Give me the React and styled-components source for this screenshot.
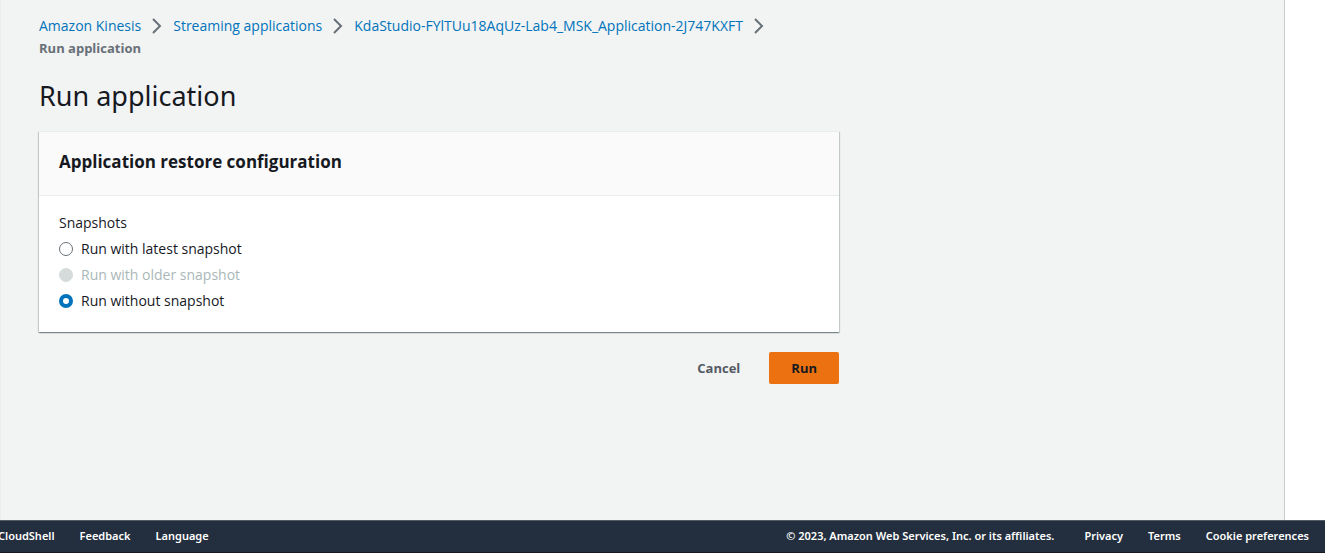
import React, { useState } from "react";
import styled, { createGlobalStyle } from "styled-components";

const GlobalStyle = createGlobalStyle`
  *, *::before, *::after { box-sizing: border-box; }
  body {
    margin: 0;
    background: #ffffff;
    color: #16191f;
    font-family: "Open Sans", "Noto Sans", sans-serif;
    font-size: 14px;
    line-height: 22px;
  }
`;

const Page = styled.div`
  display: flex;
  flex-direction: column;
  min-height: 100vh;
`;

const Workspace = styled.div`
  flex: 1;
  display: flex;
`;

const Main = styled.main`
  flex: 1;
  min-width: 0;
  padding: 15px 38px 40px;
  background: #f2f3f3;
  border-left: 1px solid #eaeded;
`;

const HelpRail = styled.aside`
  width: 41px;
  background: #ffffff;
  border-left: 1px solid #c6cccc;
`;

const Content = styled.div`
  max-width: 800px;
`;

const Crumbs = styled.ol`
  display: flex;
  flex-wrap: wrap;
  margin: 0;
  padding: 0;
  list-style: none;
`;

const Crumb = styled.li`
  display: flex;
  align-items: center;
  color: #687078;
  font-weight: ${(p) => (p.$current ? 700 : 400)};
  font-size: ${(p) => (p.$current ? 13 : 14)}px;
`;

const CrumbLink = styled.a`
  color: #0073bb;
  text-decoration: none;
  &:hover { text-decoration: underline; }
`;

const Chevron = styled.svg`
  width: 16px;
  height: 16px;
  margin: 0 8px;
  fill: none;
  stroke: #687078;
  stroke-width: 2;
`;

const Title = styled.h1`
  margin: 19px 0 17px;
  font-family: "Noto Sans", "Open Sans", sans-serif;
  font-size: 27px;
  line-height: 36px;
  font-weight: 400;
`;

const Card = styled.section`
  background: #ffffff;
  border-top: 1px solid #eaeded;
  box-shadow: 0 1px 1px 0 rgba(0, 28, 36, 0.3), 1px 1px 1px 0 rgba(0, 28, 36, 0.15),
    -1px 1px 1px 0 rgba(0, 28, 36, 0.15);
`;

const CardHeader = styled.header`
  padding: 19px 20px 22px;
  background: #fafafa;
  border-bottom: 1px solid #eaeded;
`;

const CardTitle = styled.h2`
  margin: 0;
  font-size: 17px;
  line-height: 22px;
  font-weight: 700;
`;

const Fieldset = styled.fieldset`
  display: flex;
  flex-direction: column;
  gap: 4px;
  margin: 0;
  padding: 16px 20px 20px;
  border: 0;
`;

const Legend = styled.legend`
  float: left;
  padding: 0;
  color: #16191f;
`;

const Option = styled.label`
  display: flex;
  align-items: center;
  gap: 8px;
  color: ${(p) => (p.$disabled ? "#aab7b8" : "#16191f")};
`;

const Radio = styled.input`
  appearance: none;
  width: 14px;
  height: 14px;
  margin: 0;
  border: 1px solid #687078;
  border-radius: 50%;
  background: #ffffff;
  &:checked { border: 4px solid #0073bb; }
  &:disabled { border-color: #d5dbdb; background: #d5dbdb; }
`;

const Actions = styled.div`
  display: flex;
  justify-content: flex-end;
  gap: 7px;
  margin-top: 20px;
`;

const Button = styled.button`
  height: 32px;
  padding: 0 22px;
  border: 0;
  border-radius: 2px;
  background: ${(p) => (p.$primary ? "#ec7211" : "transparent")};
  color: ${(p) => (p.$primary ? "#16191f" : "#545b64")};
  font: inherit;
  font-size: 13px;
  font-weight: 700;
  cursor: pointer;
`;

const Footer = styled.footer`
  display: flex;
  justify-content: space-between;
  padding: 0 16px 1px 0;
  overflow: hidden;
  background: #232f3e;
  border-top: 1px solid #545b64;
  border-bottom: 1px solid #16191f;
  color: #ffffff;
  font-family: "Noto Sans", "Open Sans", sans-serif;
  font-size: 11px;
  line-height: 30px;
  font-weight: 600;
  white-space: nowrap;
`;

const FooterGroup = styled.div`
  display: flex;
  gap: 25px;
  margin-left: ${(p) => (p.$clipped ? -2 : 0)}px;
`;

const Copyright = styled.span`
  margin-right: 5px;
`;

const FooterLink = styled.a`
  color: inherit;
  text-decoration: none;
`;

const trail = [
  "Amazon Kinesis",
  "Streaming applications",
  "KdaStudio-FYlTUu18AqUz-Lab4_MSK_Application-2J747KXFT",
];

const options = [
  { id: "latest", label: "Run with latest snapshot" },
  { id: "older", label: "Run with older snapshot", disabled: true },
  { id: "none", label: "Run without snapshot" },
];

export default function App() {
  const [choice, setChoice] = useState("none");
  return (
    <Page>
      <GlobalStyle />
      <Workspace>
        <Main>
          <Content>
            <nav aria-label="Breadcrumbs">
              <Crumbs>
                {trail.map((name) => (
                  <Crumb key={name}>
                    <CrumbLink href="#">{name}</CrumbLink>
                    <Chevron viewBox="0 0 16 16" aria-hidden="true">
                      <path d="M4 1l7 7-7 7" />
                    </Chevron>
                  </Crumb>
                ))}
                <Crumb $current aria-current="page">Run application</Crumb>
              </Crumbs>
            </nav>
            <Title>Run application</Title>
            <Card>
              <CardHeader>
                <CardTitle>Application restore configuration</CardTitle>
              </CardHeader>
              <Fieldset>
                <Legend>Snapshots</Legend>
                {options.map((o) => (
                  <Option key={o.id} $disabled={o.disabled}>
                    <Radio
                      type="radio"
                      name="snapshot"
                      value={o.id}
                      disabled={o.disabled}
                      checked={choice === o.id}
                      onChange={() => setChoice(o.id)}
                    />
                    {o.label}
                  </Option>
                ))}
              </Fieldset>
            </Card>
            <Actions>
              <Button type="button">Cancel</Button>
              <Button type="button" $primary>Run</Button>
            </Actions>
          </Content>
        </Main>
        <HelpRail />
      </Workspace>
      <Footer>
        <FooterGroup $clipped>
          <FooterLink href="#">CloudShell</FooterLink>
          <FooterLink href="#">Feedback</FooterLink>
          <FooterLink href="#">Language</FooterLink>
        </FooterGroup>
        <FooterGroup>
          <Copyright>© 2023, Amazon Web Services, Inc. or its affiliates.</Copyright>
          <FooterLink href="#">Privacy</FooterLink>
          <FooterLink href="#">Terms</FooterLink>
          <FooterLink href="#">Cookie preferences</FooterLink>
        </FooterGroup>
      </Footer>
    </Page>
  );
}
